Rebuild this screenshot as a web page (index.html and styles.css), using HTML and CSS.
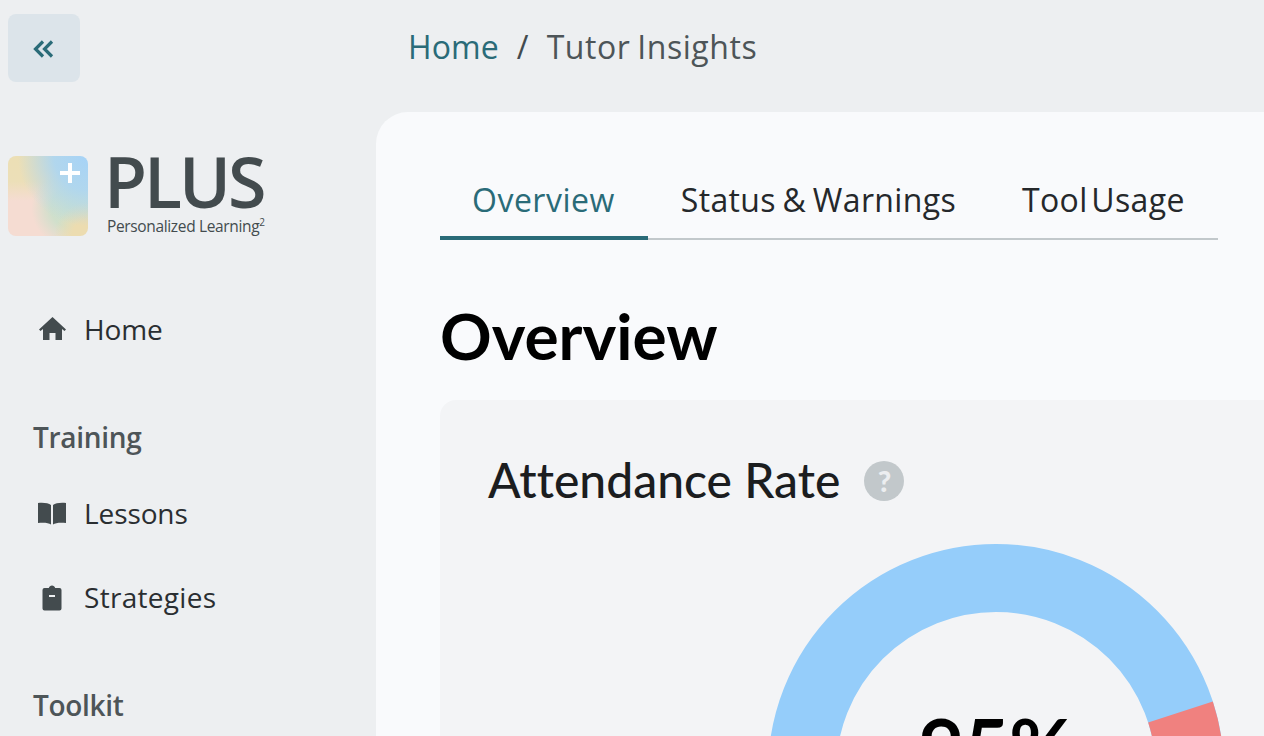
FILE: index.html
```html
<!DOCTYPE html>
<html lang="en">
<head>
<meta charset="utf-8">
<title>Tutor Insights</title>
<link rel="stylesheet" href="styles.css">
</head>
<body>
<div class="app">
  <aside class="sidebar">
    <button class="collapse" aria-label="Collapse">
      <svg width="24" height="24" viewBox="0 0 24 24" fill="none" stroke="#2a6b78" stroke-width="3.200"><path d="M11 5.500 3.500 13 11 20.500M20 5.500 12.500 13 20 20.500"/></svg>
    </button>
    <div class="logo">
      <div class="logo-mark">
        <svg width="24" height="24" viewBox="0 0 24 24"><path d="M10 2h4v8h8v4h-8v8h-4v-8H2v-4h8z" fill="#fff"/></svg>
      </div>
      <div class="logo-text">
        <div class="logo-name">PLUS</div>
        <div class="logo-sub">Personalized Learning<sup>2</sup></div>
      </div>
    </div>
    <nav class="nav">
      <a class="nav-item nav-home">
        <svg class="nav-icon" viewBox="0 0 28 28"><path d="M14.500 2 1 14.500 2.500 16 5 14v11h6.500v-7h6v7H24V14l2.500 2 1.500-1.500z" fill="#434b4e"/></svg>
        Home
      </a>
      <div class="nav-heading">Training</div>
      <a class="nav-item">
        <svg class="nav-icon" viewBox="0 0 28 28"><path d="M13 6C10.500 4 5.500 3.500 0 4v20c5.500-.8 10.500-.3 13 1.500zM15 6c2.500-2 7.500-2.500 13-2v20c-5.500-.8-10.500-.3-13 1.500z" fill="#434b4e"/></svg>
        Lessons
      </a>
      <a class="nav-item">
        <svg class="nav-icon" viewBox="0 0 28 28"><path fill-rule="evenodd" d="M14 2.500c1.500 0 2.800 1 3.200 2.500H21.500a2 2 0 0 1 2 2v18.500a2 2 0 0 1-2 2h-15a2 2 0 0 1-2-2V7a2 2 0 0 1 2-2h4.300c.4-1.500 1.700-2.500 3.200-2.500zM11 12v2h6v-2z" fill="#434b4e"/></svg>
        Strategies
      </a>
      <div class="nav-heading nav-heading-last">Toolkit</div>
    </nav>
  </aside>
  <div class="content">
    <header class="crumbs">
      <a class="crumb-link">Home</a>
      <span class="crumb-sep">/</span>
      <span class="crumb-current">Tutor Insights</span>
    </header>
    <main class="panel">
      <div class="tabs">
        <div class="tab tab-active">Overview</div>
        <div class="tab">Status &amp; Warnings</div>
        <div class="tab tab-tight">Tool Usage</div>
      </div>
      <h1 class="title">Overview</h1>
      <section class="card">
        <div class="card-head">
          <h2 class="card-title">Attendance Rate</h2>
          <span class="help">?</span>
        </div>
        <div class="ring">
          <svg width="456" height="456" viewBox="0 0 456 456">
            <circle cx="228" cy="228" r="194" fill="none" stroke="#95cdfa" stroke-width="68"/>
            <path d="M412.500 168.050A194 194 0 0 1 422 228" fill="none" stroke="#f0817f" stroke-width="68"/>
          </svg>
          <div class="ring-value">95%</div>
        </div>
      </section>
    </main>
  </div>
</div>
</body>
</html>
```
FILE: styles.css
```css
* { box-sizing: border-box; }
html, body { margin: 0; height: 100%; overflow: hidden; }
body { background: #edeff1; font-family: "Open Sans", sans-serif; color: #1b1d1f; }
.app { display: flex; height: 736px; width: 1264px; overflow: hidden; }

.sidebar { flex: 0 0 376px; padding: 14px 8px 0; }
.collapse {
  display: flex; align-items: center; justify-content: center;
  width: 72px; height: 68px; border: 0; border-radius: 8px; background: #dce4ea; padding: 0;
}
.logo { display: flex; margin-top: 74px; height: 80px; }
.logo-mark {
  width: 80px; height: 80px; border-radius: 8px; padding: 5px 6px 0 0;
  display: flex; justify-content: flex-end; align-items: flex-start;
  background:
    radial-gradient(circle at 100% 0%, #a6d3f7 0, rgba(174,214,240,.95) 30%, rgba(174,214,240,0) 62%),
    radial-gradient(circle at 100% 100%, #ecdcb0 0, #ecdcb0 14%, rgba(236,220,176,0) 30%),
    radial-gradient(circle at 78% 65%, #cce0cb 0, rgba(204,224,203,.9) 24%, rgba(204,224,203,0) 48%),
    linear-gradient(180deg, #ecdfb5 0%, #ecdfb8 32%, #f5dcd2 56%, #f5dcd2 100%);
}
.logo-text { margin-left: 16px; color: #434b4e; }
.logo-name { font-size: 70px; font-weight: 600; line-height: 51px; height: 51px; letter-spacing: -3px; }
.logo-sub { font-size: 15.500px; line-height: 20px; margin: 9px 0 0 3px; letter-spacing: -.350px; white-space: nowrap; }
.logo-sub sup { font-size: 10px; line-height: 0; vertical-align: 6px; }

.nav { margin-top: 67px; }
.nav-item { display: flex; align-items: center; height: 52px; padding-left: 30px; font-size: 28px; color: #2a2e31; letter-spacing: -.1px; }
.nav-item + .nav-item { margin-top: 32px; letter-spacing: .3px; }
.nav-icon { width: 28px; height: 28px; margin-right: 18px; flex: none; }
.nav-heading { font-size: 28px; font-weight: 600; color: #4d5558; padding-left: 25px; height: 40px; line-height: 40px; margin-top: 62px; margin-bottom: 30px; letter-spacing: -.3px; }
.nav-heading-last { margin-top: 62px; }

.content { flex: 1; min-width: 0; display: flex; flex-direction: column; }
.crumbs { flex: 0 0 112px; padding: 0 0 19px 32px; display: flex; align-items: center; font-size: 32px; letter-spacing: .1px; }
.crumb-link { color: #2a6b78; }
.crumb-sep { margin: 0 18px; color: #434b4e; }
.crumb-current { color: #4d5558; letter-spacing: .55px; word-spacing: -2px; }

.panel { flex: 1; background: #f9fafc; border-radius: 32px 0 0 0; padding: 64px 0 0 64px; }
.tabs { display: flex; width: 778px; height: 64px; border-bottom: 2px solid #c2c8cb; }
.tab { padding: 0 33px; height: 64px; line-height: 48px; font-size: 32px; white-space: nowrap; color: #25282b; letter-spacing: .35px; word-spacing: -2px; }
.tab-active { color: #2a6b78; border-bottom: 4px solid #2a6b78; padding-left: 32px; letter-spacing: .5px; }
.tab-tight { word-spacing: -5px; }

.title { margin: 0; font-family: Lato, sans-serif; font-size: 64px; font-weight: 700; line-height: 80px; color: #000; padding-top: 56px; height: 160px; }
.card { background: #f3f4f6; border-radius: 16px 0 0 0; height: 400px; padding: 48px 0 0 48px; }
.card-head { display: flex; align-items: center; height: 64px; }
.card-title { margin: 0; font-family: Lato, sans-serif; font-size: 48px; font-weight: 500; color: #1b1d1f; line-height: 64px; letter-spacing: .01px; }
.help {
  width: 40px; height: 40px; border-radius: 50%; margin: 1px 0 0 24px; background: #c2c8cb; color: #eceef0;
  font-family: Lato, sans-serif; font-weight: 900; font-size: 29px; display: flex; align-items: center; justify-content: center;
}
.ring { position: relative; width: 456px; height: 456px; margin: 32px 0 0 280px; }
.ring-value { position: absolute; left: 0; right: 0; top: 146px; text-align: center; font-family: Lato, sans-serif; font-size: 78px; line-height: 112px; font-weight: 700; color: #000; }
```
